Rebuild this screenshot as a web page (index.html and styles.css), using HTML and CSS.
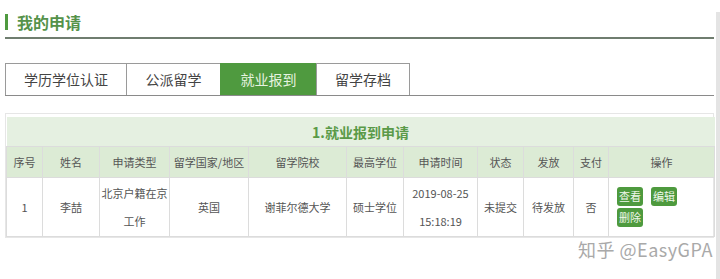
FILE: index.html
```html
<!DOCTYPE html>
<html lang="zh-CN">
<head>
  <meta charset="UTF-8" />
  <title>我的申请</title>
  <link rel="stylesheet" href="styles.css">
</head>
<body>
  <div class="page">
    <div class="main">
      <div class="page-title">
        <span class="title-bar"></span>
        <h1>我的申请</h1>
      </div>

      <div class="tabs">
        <div class="tab tab-1">学历学位认证</div>
        <div class="tab tab-2">公派留学</div>
        <div class="tab tab-3 active">就业报到</div>
        <div class="tab tab-4">留学存档</div>
      </div>

      <div class="panel">
        <table class="apply-table">
          <colgroup>
            <col style="width:36px"><col style="width:57px"><col style="width:70px"><col style="width:79px">
            <col style="width:98px"><col style="width:57px"><col style="width:74px"><col style="width:46px">
            <col style="width:50px"><col style="width:35px"><col style="width:106px">
          </colgroup>
          <tr class="caption-row">
            <td colspan="11">1.就业报到申请</td>
          </tr>
          <tr class="head-row">
            <th>序号</th>
            <th>姓名</th>
            <th>申请类型</th>
            <th>留学国家/地区</th>
            <th>留学院校</th>
            <th>最高学位</th>
            <th>申请时间</th>
            <th>状态</th>
            <th>发放</th>
            <th>支付</th>
            <th>操作</th>
          </tr>
          <tr class="data-row">
            <td>1</td>
            <td>李喆</td>
            <td class="wrap">北京户籍在京工作</td>
            <td>英国</td>
            <td>谢菲尔德大学</td>
            <td>硕士学位</td>
            <td class="wrap">2019-08-25 15:18:19</td>
            <td>未提交</td>
            <td>待发放</td>
            <td>否</td>
            <td class="ops">
              <div class="btns">
                <a class="btn">查看</a>
                <a class="btn">编辑</a>
                <a class="btn">删除</a>
              </div>
            </td>
          </tr>
        </table>
      </div>
    </div>
    <div class="scrollbar"></div>
  </div>
  <div class="watermark">知乎 @EasyGPA</div>
</body>
</html>
```

FILE: styles.css
```css
body {
  margin: 0;
  font-family: "Noto Sans CJK SC", "Noto Sans", sans-serif;
  background: #ffffff;
  color: #555;
}

.page {
  display: flex;
  padding-left: 5px;
}

.main {
  width: 709px;
}

.scrollbar {
  width: 4px;
  margin-left: 2px;
  margin-top: 12px;
  height: 267px;
  background: #e4e4e4;
}

.page-title {
  display: flex;
  align-items: center;
  height: 37px;
  border-bottom: 2px solid #6f7d6f;
}

.title-bar {
  width: 3px;
  height: 16px;
  background: #4f9a3f;
  margin-right: 9px;
  margin-top: 6px;
}

h1 {
  margin: 6px 0 0;
  font-size: 16px;
  line-height: 20px;
  color: #55924a;
  font-weight: bold;
}

.tabs {
  display: flex;
  margin-top: 24px;
  height: 32px;
  border-bottom: 1px solid #8a8a8a;
}

.tab {
  box-sizing: border-box;
  flex-shrink: 0;
  height: 32px;
  line-height: 31px;
  border: 1px solid #9a9a9a;
  border-bottom: none;
  border-right: none;
  font-size: 14px;
  color: #444;
  text-align: center;
  white-space: nowrap;
}

.tab-1 { width: 121px; }
.tab-2 { width: 94px; }
.tab-3 { width: 96px; }
.tab-4 { width: 94px; border-right: 1px solid #9a9a9a; }

.tab.active {
  background: #4f9a3f;
  color: #e6f3e0;
  border-color: #4f9a3f;
}

.panel {
  margin-top: 17px;
  border: 1px solid #e6e6e6;
  padding-top: 3px;
}

.apply-table {
  width: 100%;
  border-collapse: collapse;
  table-layout: fixed;
  font-size: 11px;
}

.apply-table td,
.apply-table th {
  border: 1px solid #dcdcdc;
  text-align: center;
  font-weight: normal;
  padding: 0;
}

.caption-row td {
  height: 29px;
  background: #e5f0e1;
  color: #5a9a48;
  font-size: 14px;
  font-weight: bold;
  border: none;
}

.head-row th {
  height: 30px;
  background: #dcebd5;
  color: #555;
}

.data-row td {
  height: 58px;
  color: #555;
  line-height: 28px;
}

.data-row td.wrap {
  padding: 0 1px;
}

.data-row td.ops {
  text-align: left;
  padding-left: 8px;
}

.btns {
  display: flex;
  flex-wrap: wrap;
  width: 70px;
  gap: 2px 8px;
}

.btn {
  display: block;
  width: 26px;
  height: 19px;
  line-height: 19px;
  text-align: center;
  background: #4e9a3e;
  color: #eef7ea;
  font-size: 11px;
  border-radius: 3px;
}

.watermark {
  position: absolute;
  left: 578px;
  top: 236px;
  font-size: 18px;
  line-height: 26px;
  color: #a9a9a9;
  letter-spacing: 0.5px;
  text-shadow: 0 0 2px #fff;
}
```
